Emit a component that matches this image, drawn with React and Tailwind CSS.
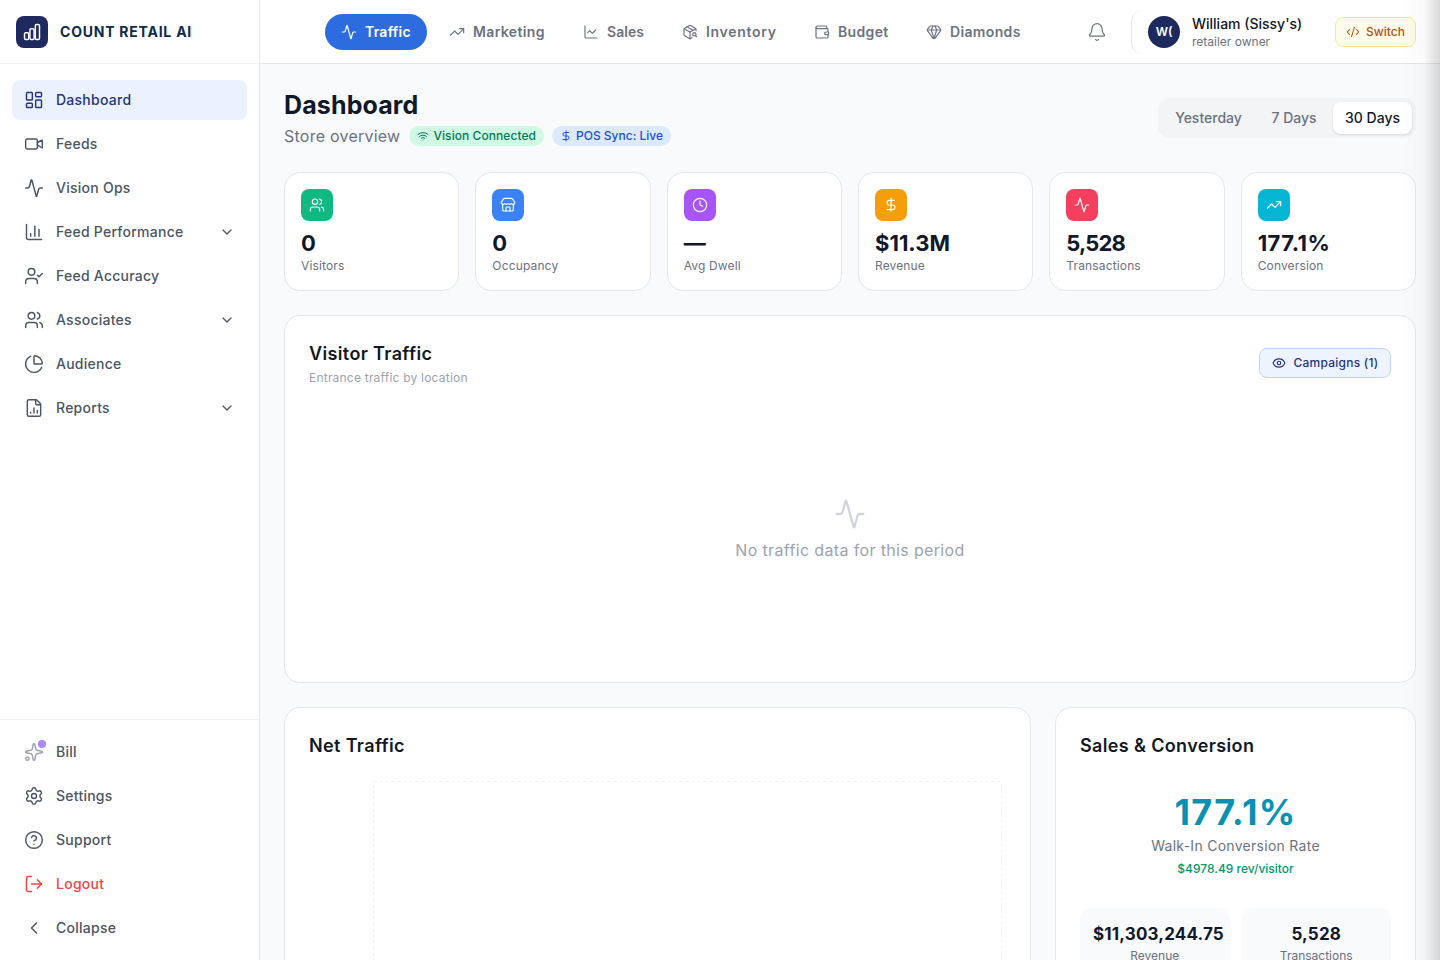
import React from "react";
import {
  Activity,
  Bell,
  ChartColumn,
  ChartLine,
  ChartPie,
  ChevronDown,
  ChevronLeft,
  CircleHelp,
  Clock,
  CodeXml,
  DollarSign,
  Eye,
  FileChartColumn,
  Gem,
  LayoutDashboard,
  LogOut,
  PackageSearch,
  Settings,
  Sparkles,
  Store,
  TrendingUp,
  UserCheck,
  Users,
  Video,
  Wallet,
  Wifi,
} from "lucide-react";

const mainNav = [
  { title: "Dashboard", icon: LayoutDashboard, active: true },
  { title: "Feeds", icon: Video },
  { title: "Vision Ops", icon: Activity },
  { title: "Feed Performance", icon: ChartColumn, more: true },
  { title: "Feed Accuracy", icon: UserCheck },
  { title: "Associates", icon: Users, more: true },
  { title: "Audience", icon: ChartPie },
  { title: "Reports", icon: FileChartColumn, more: true },
];

const topNav = [
  { title: "Marketing", icon: TrendingUp, width: "w-[128px] tracking-[0.025em]" },
  { title: "Sales", icon: ChartLine, width: "w-[93px] tracking-[0.005em]" },
  { title: "Inventory", icon: PackageSearch, width: "w-[126px] tracking-[0.05em]" },
  { title: "Budget", icon: Wallet, width: "w-[106px] tracking-[0.025em]" },
  { title: "Diamonds", icon: Gem, width: "w-[128px] tracking-[0.025em]" },
];

const stats = [
  { label: "Visitors", value: "0", icon: Users, color: "bg-[#10b981]" },
  { label: "Occupancy", value: "0", icon: Store, color: "bg-[#3b82f6]" },
  { label: "Avg Dwell", value: "—", icon: Clock, color: "bg-[#a855f7]" },
  { label: "Revenue", value: "$11.3M", icon: DollarSign, color: "bg-[#f59e0b]" },
  { label: "Transactions", value: "5,528", icon: Activity, color: "bg-[#f43f5e]", fit: "tracking-[-0.04em]" },
  { label: "Conversion", value: "177.1%", icon: TrendingUp, color: "bg-[#06b6d4]", fit: "tracking-[0.02em]" },
];

const NavItem = ({ item }) => {
  const Icon = item.icon;
  return (
    <a
      className={`flex h-10 items-center gap-3 rounded-lg px-3 text-sm font-medium tracking-[0.018em] ${
        item.active ? "bg-[#ebf2fe] text-[#27357a]" : "text-[#4b5563]"
      }`}
    >
      <Icon className="size-5 shrink-0" strokeWidth={1.75} />
      <span className="flex-1">{item.title}</span>
      {item.more && <ChevronDown className="size-4 shrink-0" />}
    </a>
  );
};

const Sidebar = () => (
  <aside className="flex h-full w-[260px] shrink-0 flex-col border-r border-[#e5e7eb] bg-white">
    <div className="flex h-16 shrink-0 items-center gap-3 border-b border-[#f0f1f3] px-4">
      <div className="flex size-8 items-center justify-center rounded-lg bg-[#1e2a5e]">
        <svg className="size-5" viewBox="0 0 24 24" fill="none" stroke="white" strokeWidth="1.75">
          <rect x="3" y="13" width="5" height="8" rx="1.5" />
          <rect x="9.5" y="8" width="5" height="13" rx="1.5" />
          <rect x="16" y="3" width="5" height="18" rx="1.5" />
        </svg>
      </div>
      <span className="text-sm font-bold tracking-[0.055em] text-[#0f2a4a]">COUNT RETAIL AI</span>
    </div>
    <nav className="flex flex-1 flex-col gap-1 p-3 pt-4">
      {mainNav.map((item) => (
        <NavItem key={item.title} item={item} />
      ))}
    </nav>
    <div className="flex flex-col gap-1 border-t border-[#f0f1f3] p-3">
      <a className="flex h-10 items-center gap-3 rounded-lg px-3 text-sm font-medium tracking-[0.018em] text-[#4b5563]">
        <span className="relative">
          <Sparkles className="size-5 text-[#9ca3af]" strokeWidth={1.75} />
          <span className="absolute -right-0.5 -top-0.5 size-2 rounded-full bg-[#a78bfa]"></span>
        </span>
        Bill
      </a>
      <NavItem item={{ title: "Settings", icon: Settings }} />
      <NavItem item={{ title: "Support", icon: CircleHelp }} />
      <a className="flex h-10 items-center gap-3 rounded-lg px-3 text-sm font-medium tracking-[0.018em] text-[#ef4444]">
        <LogOut className="size-5" strokeWidth={1.75} />
        Logout
      </a>
      <NavItem item={{ title: "Collapse", icon: ChevronLeft }} />
    </div>
  </aside>
);

const Header = () => (
  <header className="flex h-16 shrink-0 items-center border-b border-[#e5e7eb] bg-white pl-[65px] pr-6">
    <div className="flex items-center gap-1.5">
      <a className="flex h-9 w-[102px] items-center gap-2 rounded-full bg-[#2d6cdf] px-4 text-sm font-semibold tracking-[0.02em] text-white">
        <Activity className="size-4" strokeWidth={1.75} />
        Traffic
      </a>
      {topNav.map((item) => {
        const Icon = item.icon;
        return (
          <a
            key={item.title}
            className={`flex h-9 items-center gap-2 px-4 text-sm font-semibold text-[#6b7280] ${item.width}`}
          >
            <Icon className="size-4 shrink-0" strokeWidth={1.75} />
            {item.title}
          </a>
        );
      })}
    </div>
    <div className="ml-auto flex items-center">
      <Bell className="mr-6 size-5 text-[#6b7280]" strokeWidth={1.5} />
      <div className="flex h-11 items-center gap-3 rounded-xl border-l border-[#e5e7eb] pl-4">
        <div className="flex size-8 items-center justify-center rounded-full bg-[#1e2a5e] text-xs font-semibold text-white">
          W(
        </div>
        <div className="w-[139px] leading-none">
          <div className="text-sm font-medium leading-5 text-[#111827]">William (Sissy's)</div>
          <div className="text-xs leading-4 text-[#6b7280]">retailer owner</div>
        </div>
      </div>
      <button className="ml-1 flex h-[30px] w-[81px] items-center justify-center gap-1.5 rounded-lg border border-[#fde68a] bg-[#fffbeb] text-xs font-medium text-[#b45309]">
        <CodeXml className="size-3.5" strokeWidth={1.75} />
        Switch
      </button>
    </div>
  </header>
);

const StatCard = ({ stat }) => {
  const Icon = stat.icon;
  return (
    <div className="rounded-2xl border border-[#e5e7eb] bg-white p-4">
      <div className={`flex size-8 items-center justify-center rounded-lg ${stat.color}`}>
        <Icon className="size-4 text-white" strokeWidth={1.75} />
      </div>
      <div className={`mt-2 text-[22px] font-bold leading-7 text-[#111827] ${stat.fit || ""}`}>{stat.value}</div>
      <div className="text-xs leading-[17px] tracking-[0.012em] text-[#6b7280]">{stat.label}</div>
    </div>
  );
};

const App = () => {
  return (
    <div className="relative flex h-screen overflow-hidden bg-[#f9fafb] [font-family:Inter,sans-serif]">
      <Sidebar />
      <div className="flex min-w-0 flex-1 flex-col">
        <Header />
        <main className="flex flex-col gap-6 overflow-hidden p-6">
          <div className="flex items-start justify-between">
            <div>
              <h1 className="pt-px text-[25px] font-bold leading-8 tracking-[0.005em] text-[#111827]">Dashboard</h1>
              <div className="mt-[3px] flex items-center gap-2">
                <span className="mr-px text-base leading-6 tracking-[0.015em] text-[#6b7280]">Store overview</span>
                <span className="flex h-5 items-center gap-1 rounded-full bg-[#d1fae5] px-2 text-xs font-medium tracking-[0.005em] text-[#047857]">
                  <Wifi className="size-3" />
                  Vision Connected
                </span>
                <span className="flex h-5 items-center gap-1 rounded-full bg-[#dbeafe] px-2 text-xs font-medium text-[#1d4ed8]">
                  <DollarSign className="size-3" />
                  POS Sync: Live
                </span>
              </div>
            </div>
            <div className="mt-2.5 flex h-10 items-center gap-1 rounded-xl bg-[#f3f4f6] p-1 text-sm font-medium">
              <button className="h-8 w-[93px] text-[#6b7280]">Yesterday</button>
              <button className="h-8 w-[70px] text-[#6b7280]">7 Days</button>
              <button className="h-8 w-[79px] rounded-lg bg-white text-[#111827] shadow-sm">30 Days</button>
            </div>
          </div>

          <div className="grid grid-cols-6 gap-4">
            {stats.map((stat) => (
              <StatCard key={stat.label} stat={stat} />
            ))}
          </div>

          <section className="flex h-[368px] shrink-0 flex-col rounded-2xl border border-[#e5e7eb] bg-white p-6">
            <div className="flex items-start justify-between">
              <div>
                <h2 className="text-lg font-semibold leading-7 tracking-[0.02em] text-[#111827]">Visitor Traffic</h2>
                <p className="mt-[2px] text-xs leading-4 tracking-[0.018em] text-[#9ca3af]">Entrance traffic by location</p>
              </div>
              <button className="mt-2 flex h-[30px] w-[132px] items-center justify-center gap-2 rounded-lg border border-[#bfd3f8] bg-[#eef4ff] text-xs font-medium tracking-[0.02em] text-[#27357a]">
                <Eye className="size-3.5" />
                Campaigns (1)
              </button>
            </div>
            <div className="flex flex-1 flex-col items-center justify-center gap-2 pb-1 pt-[19px]">
              <Activity className="size-8 text-[#d1d5db]" strokeWidth={1.75} />
              <p className="text-base leading-6 tracking-[0.022em] text-[#9ca3af]">No traffic data for this period</p>
            </div>
          </section>

          <div className="grid grid-cols-[747px_1fr] gap-6">
            <section className="h-[400px] rounded-2xl border border-[#e5e7eb] bg-white p-6">
              <h2 className="text-lg font-semibold leading-7 tracking-[0.02em] text-[#111827]">Net Traffic</h2>
              <svg className="ml-16 mt-[21px] block h-[300px] w-[630px]" fill="none">
                <rect x="0.5" y="0.5" width="628" height="299" stroke="#f0f1f3" strokeDasharray="3 3" />
              </svg>
            </section>
            <section className="h-[400px] rounded-2xl border border-[#e5e7eb] bg-white p-6">
              <h2 className="text-lg font-semibold leading-7 tracking-[0.02em] text-[#111827]">Sales &amp; Conversion</h2>
              <div className="mt-8 text-center">
                <div className="text-4xl font-bold leading-10 tracking-[0.035em] text-[#0891b2]">177.1%</div>
                <div className="mt-1 text-sm leading-5 tracking-[0.02em] text-[#6b7280]">Walk-In Conversion Rate</div>
                <div className="mt-[5px] text-xs font-medium leading-4 text-[#059669]">$4978.49 rev/visitor</div>
              </div>
              <div className="mt-[31px] grid grid-cols-2 gap-3">
                <div className="rounded-xl bg-[#f9fafb] py-3 pl-[13px] pr-2 text-center">
                  <div className="text-[17px] font-bold leading-7 tracking-[0.01em] text-[#111827]">$11,303,244.75</div>
                  <div className="-ml-[5px] text-xs leading-4 text-[#6b7280]">Revenue</div>
                </div>
                <div className="rounded-xl bg-[#f9fafb] px-2 py-3 text-center">
                  <div className="text-[17px] font-bold leading-7 tracking-[0.01em] text-[#111827]">5,528</div>
                  <div className="text-xs leading-4 text-[#6b7280]">Transactions</div>
                </div>
              </div>
            </section>
          </div>
        </main>
      </div>
      <div className="pointer-events-none absolute inset-y-0 right-0 w-10 bg-gradient-to-l from-black/15 via-black/[0.02] via-40% to-transparent"></div>
    </div>
  );
};

export default App;
